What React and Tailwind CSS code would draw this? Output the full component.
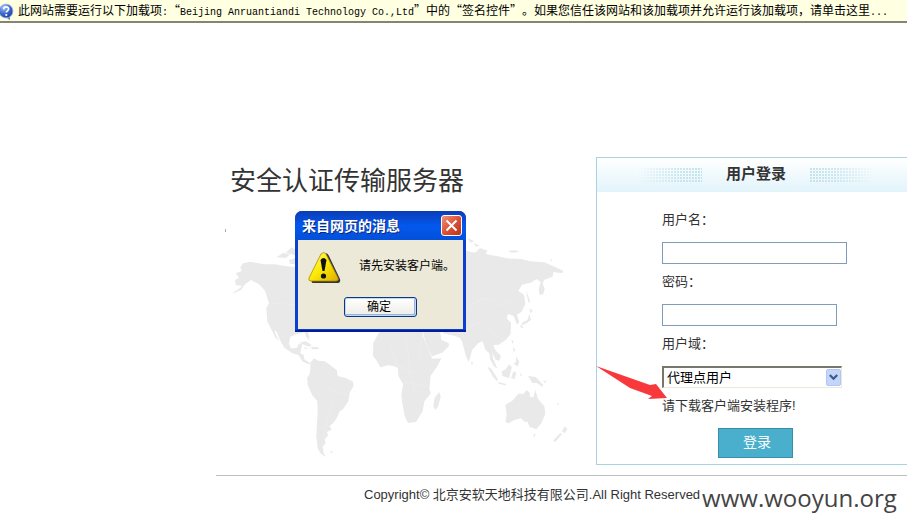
import React from "react";

const land = "#e9e9e9";

function HelpIcon() {
  return (
    <svg width="14" height="18" viewBox="0 0 14 18" className="shrink-0" aria-hidden="true">
      <defs>
        <radialGradient id="help" cx="35%" cy="25%" r="85%">
          <stop offset="0" stopColor="#a9c4f5" />
          <stop offset="0.5" stopColor="#3f6fd4" />
          <stop offset="1" stopColor="#16348f" />
        </radialGradient>
      </defs>
      <path d="M5 15L10 18L10 14Z" fill="#5f7fc4" />
      <circle cx="6" cy="9" r="7" fill="url(#help)" stroke="#b3c2e4" strokeWidth="0.8" />
      <path d="M3.8 7.2C3.8 4.2 8.6 4.2 8.6 7C8.6 8.8 6.3 8.8 6.3 10.6" fill="none" stroke="#fff" strokeWidth="1.7" />
      <circle cx="6.3" cy="13" r="1.1" fill="#fff" />
    </svg>
  );
}

function WorldMap() {
  return (
    <svg width="380" height="240" viewBox="0 0 380 240" className="block" aria-hidden="true">
      <path d="M9.500 4v3" stroke="#aaa" strokeWidth="1" />
      <g fill={land} transform="translate(-1 5) scale(0.33333)">
        <path d="M52 190L74 175L82 168L62 165L60 150L72 143L62 130L80 123L76 112L84 100L105 95L150 103L180 103L210 108L245 112L330 120L345 170L320 200L290 225L280 260L278 300L284 325L276 322L268 306L240 314L226 320L222 340L228 355L246 354L250 343L262 342L258 358L256 370L266 374L268 388L286 400L280 403L262 394L250 375L232 370L208 353L196 332L184 304L178 302L192 334L182 324L168 296L157 275L154 235L162 220L150 182L132 163L108 150L90 163L78 180L56 190Z" />
        <path d="M185 82L205 68L225 74L212 84ZM212 68L230 52L246 62L240 76ZM222 90L242 84L246 102L226 102Z" />
        <path d="M252 338L272 334L290 345L282 350ZM286 352L306 350L314 357L292 358ZM266 352L278 354L272 358ZM270 312L276 312L284 332L278 328Z" />
        <path d="M286 398L297 385L310 392L330 394L348 407L365 420L368 438L392 444L413 454L416 467L404 488L400 514L384 538L374 544L365 565L353 581L343 588L350 599L336 605L339 617L329 627L332 640L323 650L326 670L334 681L318 672L308 655L304 620L306 580L308 545L307 513L293 497L279 467L276 445L284 432L286 418Z" />
        <path d="M344 663L356 665L350 669Z" />
        <path d="M475 340L491 310L525 290L620 292L630 350L580 405L548 402L536 408L518 406L496 412L486 394L474 378Z" />
      </g>
      <g fill={land} transform="translate(174 5) scale(0.33333)">
        <path d="M-50 340L-34 310L0 290L92 302L108 342L127 386L154 385L142 409L122 437L118 478L123 490L103 514L98 543L78 576L54 579L44 558L36 513L34 493L40 463L25 438L24 414L12 408L-8 400L-29 405Z" />
        <path d="M148 486L152 500L144 530L136 540L130 528L134 503Z" />
        <path d="M98 300L150 298L154 330L176 339L177 348L157 368L126 379L115 357L105 332Z" />
        <path d="M120 160L180 100L228 62L255 68L270 54L292 62L287 72L330 80L350 85L395 87L420 94L463 97L490 109L520 122L517 130L490 126L488 140L463 149L458 160L464 177L460 193L449 195L446 178L452 157L440 147L422 158L396 164L385 183L402 194L406 222L395 245L381 254L388 275L381 284L371 258L354 252L350 265L363 278L362 312L347 330L326 344L310 345L316 360L333 378L328 392L317 389L306 367L310 388L322 415L313 410L300 388L298 370L286 359L278 334L265 339L246 361L240 385L235 396L226 373L217 337L210 324L198 319L160 310Z" />
        <path d="M232 24L252 33L242 39ZM252 39L269 47L257 50ZM355 62L377 61L388 66L364 68ZM482 87L488 90L482 94Z" />
        <path d="M408 182L414 196L421 219L415 216ZM418 235L429 242L422 250ZM418 251L423 269L411 279L392 287L400 275L413 270ZM390 286L401 290L394 296Z" />
        <path d="M364 329L371 333L368 343ZM368 350L377 361L371 366ZM378 379L388 395L382 410L371 400L378 396ZM243 394L250 400L245 406Z" />
        <path d="M292 410L304 416L324 448L321 454L308 439ZM324 456L350 462L345 466L326 461ZM357 403L366 411L357 445L337 437L335 424L347 418ZM371 423L379 428L374 448L363 444ZM390 430L398 436L391 437ZM414 437L438 442L460 465L457 470L440 459L427 459ZM459 455L471 451L465 460Z" />
        <path d="M346 524L367 512L385 491L400 492L410 480L420 489L419 499L430 503L436 480L444 506L463 529L466 551L455 578L439 598L419 591L413 575L405 576L392 565L371 571L356 580L346 576L350 553Z" />
        <path d="M430 611L437 613L432 623ZM524 589L532 597L524 610L516 604ZM511 609L516 613L495 637L490 631ZM500 519L509 522L504 526Z" />
      </g>
      <g fill="none" stroke="#efefef" strokeWidth="0.6">
        <path d="M54 78L82 80M95 143L105 157L116 165L132 170M108 210L112 190L119 174M174 118L181 140L199 148M190 112L195 154L201 174M185 157L209 161M206 110L203 132L211 143M254 80L270 73L285 80L301 75M250 104L265 97L280 112L290 114" />
      </g>
    </svg>
  );
}

function MessageDialog() {
  return (
    <section
      role="dialog"
      aria-labelledby="dialog-title"
      className="absolute left-[79px] top-[54px] w-[171px] rounded-t-[7px] border-b-2 border-[#001d9c] bg-[#0b3fd0] px-[3px] pb-px font-['Liberation_Sans','Noto_Sans_CJK_SC',sans-serif]"
    >
      <header className="-mx-[3px] flex h-[29px] items-center justify-between rounded-t-[7px] bg-linear-to-b from-[#0a3cb5] via-[#0358ee] to-[#0350d8] pr-1 pl-[7px]">
        <h2 id="dialog-title" className="text-[14px] leading-5 font-bold whitespace-nowrap text-white [text-shadow:1px_1px_#0a2a80]">
          来自网页的消息
        </h2>
        <button
          type="button"
          aria-label="关闭"
          className="flex size-[21px] items-center justify-center rounded-[3px] border border-white bg-linear-to-br from-[#ee9078] via-[#dd5136] to-[#b9331b]"
        >
          <svg width="15" height="15" viewBox="0 0 15 15" className="shrink-0" aria-hidden="true">
            <path d="M2.500 2.500L12.500 12.500M12.500 2.500L2.500 12.500" stroke="#fff" strokeWidth="2" />
          </svg>
        </button>
      </header>
      <div className="flex h-[89px] flex-col bg-[#ece9d8] pt-[11px]">
        <div className="flex items-start pl-[10px]">
          <svg width="33" height="32" viewBox="0 0 33 32" className="shrink-0" aria-hidden="true">
            <defs>
              <linearGradient id="warn" x1="0" x2="1" y1="0" y2="1">
                <stop offset="0" stopColor="#ffff7a" />
                <stop offset="0.5" stopColor="#fbe905" />
                <stop offset="1" stopColor="#e0ac00" />
              </linearGradient>
            </defs>
            <path d="M17 3Q19 1 21 5L32 28Q33 32 29 32H5Q3 32 4 29Z" fill="#35343a" />
            <path d="M13 3Q16 0 18 3L30 27Q31 30 28 30H3Q0 30 1 27Z" fill="url(#warn)" stroke="#a98d00" strokeWidth="0.8" />
            <path d="M12.500 9Q15.500 5 18.500 9L16.500 20H14.500Z" fill="#111" />
            <circle cx="15.500" cy="25" r="2.600" fill="#111" />
          </svg>
          <p className="ml-[18px] pt-[5px] text-[12px] leading-5 whitespace-nowrap text-black">请先安装客户端。</p>
        </div>
        <button
          type="button"
          className="mt-[14px] ml-[46px] h-5 w-[73px] rounded-[3px] border border-[#0a3a7c] bg-linear-to-b from-white to-[#edece6] pr-[3px] text-[12px] leading-[18px] text-black shadow-[inset_0_0_0_1px_#c3d8f7,inset_-1px_-1px_0_1px_#94b3e4]"
        >
          确定
        </button>
      </div>
    </section>
  );
}

function Dots({ id, flip }) {
  return (
    <svg width="64" height="14" viewBox="0 0 64 14" aria-hidden="true">
      <defs>
        <pattern id={id} width="3" height="3" patternUnits="userSpaceOnUse">
          <rect width="2" height="2" fill="#c3e3ea" />
        </pattern>
        <linearGradient id={id + "-fade"} x1={flip ? 1 : 0} x2={flip ? 0 : 1} y1="0" y2="0">
          <stop offset="0" stopColor="#fff" stopOpacity="0" />
          <stop offset="0.6" stopColor="#fff" stopOpacity="0.8" />
          <stop offset="1" stopColor="#fff" />
        </linearGradient>
        <mask id={id + "-mask"}>
          <rect width="64" height="14" fill={"url(#" + id + "-fade)"} />
        </mask>
      </defs>
      <rect width="64" height="14" fill={"url(#" + id + ")"} mask={"url(#" + id + "-mask)"} />
    </svg>
  );
}

function LoginPanel() {
  return (
    <section className="relative w-[320px] shrink-0 border border-[#a9d3e0] bg-white">
      <header className="flex h-[34px] items-center justify-center gap-6 bg-linear-to-b from-white to-[#e2f4fb]">
        <Dots id="dots-left" />
        <h2 className="pb-[2px] text-[15px] leading-5 font-bold text-[#333]">用户登录</h2>
        <Dots id="dots-right" flip />
      </header>
      <form className="flex flex-col items-start pt-[18px] pb-[6px] pl-[65px] text-[13px] leading-5" onSubmit={(e) => e.preventDefault()}>
        <label htmlFor="username">用户名：</label>
        <input id="username" type="text" className="mt-3 h-[22px] w-[185px] border border-[#7f9db9] bg-white px-1 outline-none" />
        <label htmlFor="password" className="mt-2">密码：</label>
        <input id="password" type="password" className="mt-3 h-[22px] w-[175px] border border-[#7f9db9] bg-white px-1 outline-none" />
        <label htmlFor="domain" className="mt-2">用户域：</label>
        <div className="relative mt-3 w-[180px]">
          <select
            id="domain"
            className="block h-[22px] w-full appearance-none border-t-2 border-r border-b border-l-2 border-t-[#77776b] border-r-[#ece9d8] border-b-[#ece9d8] border-l-[#77776b] bg-white pl-[3px] text-[13px] leading-[18px] text-black outline-none"
          >
            <option>代理点用户</option>
          </select>
          <svg width="15" height="17" viewBox="0 0 15 17" className="pointer-events-none absolute top-[3px] right-px" aria-hidden="true">
            <rect x="0.5" y="0.5" width="14" height="16" rx="1.500" fill="#c3d5fb" stroke="#b0c6f3" />
            <path d="M3.800 6L7.500 9.700L11.200 6" fill="none" stroke="#3f5985" strokeWidth="2.200" />
          </svg>
        </div>
        <a href="#download" className="mt-2 text-[#333]">请下载客户端安装程序!</a>
        <button type="submit" className="mt-3 ml-14 h-[30px] w-[75px] border border-[#3a8ea8] bg-[#49afcd] pb-[3px] pl-[3px] text-[14px] leading-5 text-white">
          登录
        </button>
      </form>
      <svg width="72" height="36" viewBox="0 0 72 36" className="pointer-events-none absolute -left-px top-[208px]" aria-hidden="true">
        <path d="M0 0L54 19L60 18L71 32L52 33L56 30L34 22Z" fill="#f8393c" />
      </svg>
    </section>
  );
}

function Latin({ children }) {
  return <span className="font-['Liberation_Mono',monospace] text-[10px]">{children}</span>;
}

export default function App() {
  return (
    <div className="min-h-screen overflow-hidden bg-white font-['Liberation_Sans','Noto_Sans_CJK_SC',sans-serif] text-[#333]">
      <aside className="flex h-[23px] items-center gap-1 border-b-2 border-[#858577] bg-[#ffffe1] text-black">
        <HelpIcon />
        <p className="pt-[2px] font-['Noto_Sans_CJK_SC',sans-serif] text-[12px] leading-5 whitespace-nowrap [text-spacing-trim:space-all]">
          此网站需要运行以下加载项<Latin>:</Latin>“<Latin>Beijing Anruantiandi Technology Co.,Ltd</Latin>”中的“签名控件”。如果您信任该网站和该加载项并允许运行该加载项，请单击这里<Latin>...</Latin>
        </p>
      </aside>
      <div className="ml-[216px] pt-[134px]">
        <main className="flex">
          <div className="relative w-[380px] shrink-0 pt-2">
            <h1 className="pl-[14px] text-[26px] leading-8">安全认证传输服务器</h1>
            <div className="pt-7">
              <WorldMap />
            </div>
            <MessageDialog />
          </div>
          <LoginPanel />
        </main>
        <footer className="mt-[10px] flex items-start gap-[2px] border-t border-[#bfbfbf] pl-[148px] whitespace-nowrap">
          <p className="pt-[9px] text-[13px] leading-5">Copyright© 北京安软天地科技有限公司.All Right Reserved</p>
          <p className="pt-[6px] font-['Open_Sans',sans-serif] text-[24px] leading-8 text-[#444]">www.wooyun.org</p>
        </footer>
      </div>
    </div>
  );
}
